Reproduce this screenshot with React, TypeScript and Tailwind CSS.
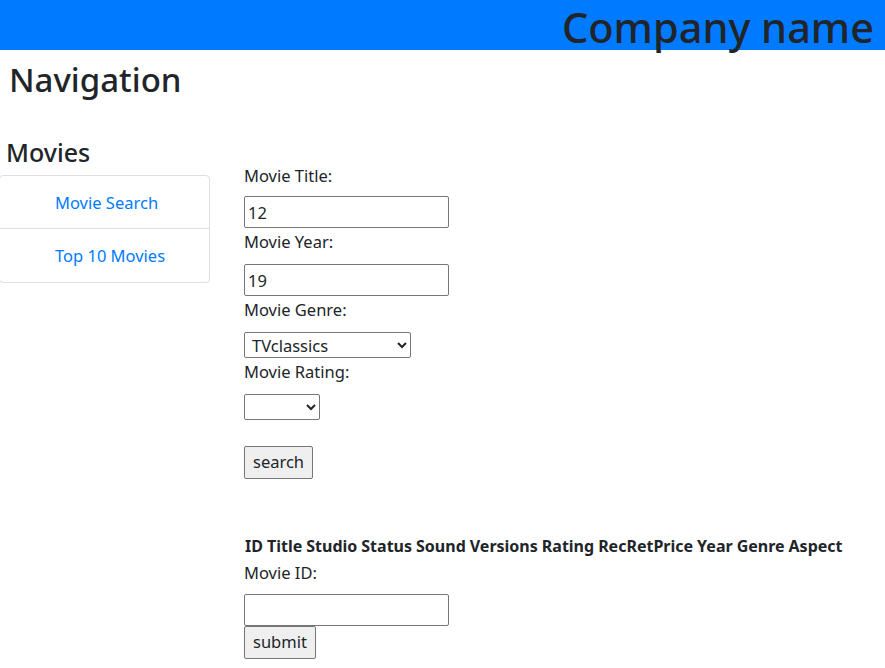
import React from "react";

const font = { fontFamily: '"Noto Sans", "Open Sans", sans-serif' };

function Label({ text }: { text: string }) {
  return <label className="block h-6 text-[16.5px] leading-6 text-[#212529]">{text}</label>;
}

const headers = ["ID", "Title", "Studio", "Status", "Sound", "Versions", "Rating", "RecRetPrice", "Year", "Genre", "Aspect"];

export default function App() {
  return (
    <div className="min-h-[668px] bg-white text-[#212529]" style={font}>
      <header className="flex h-[50px] justify-end bg-[#007bff] pr-[11px]">
        <h1 className="text-[41.5px] font-medium leading-[54px] text-[#212529]">Company name</h1>
      </header>

      <h2 className="ml-[9px] mt-[8px] text-[33px] font-medium leading-[44px]">Navigation</h2>

      <div className="flex">
        <aside className="w-[210px] shrink-0">
          <h4 className="ml-[6px] mt-[36px] text-[25px] font-medium leading-[28px]">Movies</h4>
          <ul className="ml-[-1px] mt-[9px] rounded border border-[#dfdfdf]">
            <li className="flex h-[53px] items-center border-b border-[#dfdfdf] pl-[55px] pt-[2px]">
              <a href="#" className="text-[16.5px] text-[#007bff]">Movie Search</a>
            </li>
            <li className="flex h-[53px] items-center pl-[55px] pt-[2px]">
              <a href="#" className="text-[16.5px] text-[#007bff]">Top 10 Movies</a>
            </li>
          </ul>
        </aside>

        <main className="ml-[34px] flex flex-col items-start pt-[62px]">
          <Label text="Movie Title:" />
          <input defaultValue="12" className="mt-[8px] h-[32px] w-[205px] rounded-[2px] border border-[#767676] px-[3px] text-[16.5px]" />
          <div className="mt-[2px]">
            <Label text="Movie Year:" />
          </div>
          <input defaultValue="19" className="mt-[10px] h-[32px] w-[205px] rounded-[2px] border border-[#767676] px-[3px] text-[16.5px]" />
          <div className="mt-[2px]">
            <Label text="Movie Genre:" />
          </div>
          <select defaultValue="TVclassics" className="mt-[10px] h-[26px] w-[167px] rounded-[2px] border border-[#767676] pl-[3px] text-[16.5px]">
            <option>TVclassics</option>
          </select>
          <div className="mt-[2px]">
            <Label text="Movie Rating:" />
          </div>
          <select defaultValue="" className="mt-[10px] h-[26px] w-[76px] rounded-[2px] border border-[#767676] text-[16.5px]">
            <option value=""></option>
          </select>
          <button className="mt-[26px] h-[33px] rounded-[2px] border border-[#767676] bg-[#efefef] px-[8px] text-[16.5px]">search</button>

          <table className="ml-[-2px] mt-[53px] border-separate border-spacing-[2px] text-[16px] font-bold leading-6">
            <thead>
              <tr>
                {headers.map((h) => (
                  <th key={h} className="px-[1px] py-0 text-left">{h}</th>
                ))}
              </tr>
            </thead>
          </table>
          <div className="mt-px">
            <Label text="Movie ID:" />
          </div>
          <input className="mt-[9px] h-[32px] w-[205px] rounded-[2px] border border-[#767676] px-[3px] text-[16.5px]" />
          <button className="h-[33px] rounded-[2px] border border-[#767676] bg-[#efefef] px-[8px] text-[16.5px]">submit</button>
        </main>
      </div>
    </div>
  );
}
